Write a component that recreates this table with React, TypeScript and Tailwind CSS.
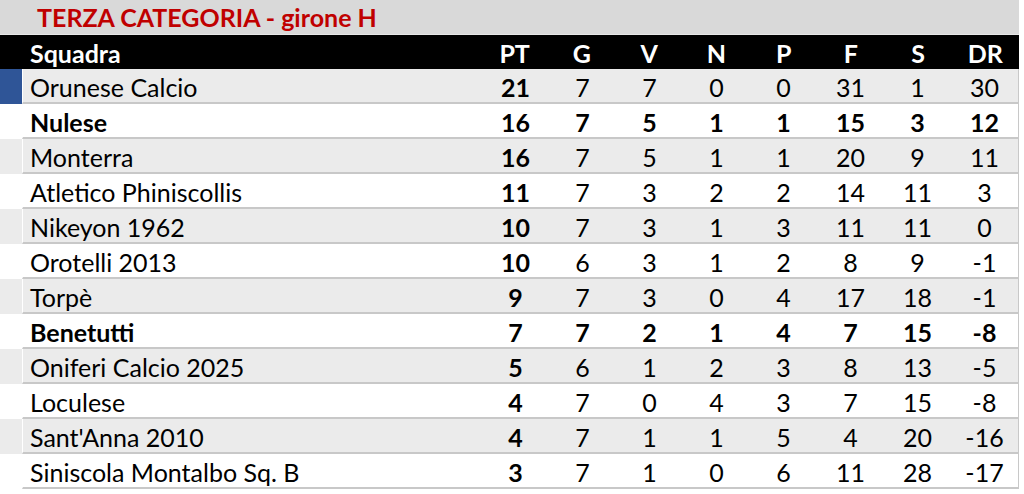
import React from "react";

type Row = { name: string; v: (string | number)[]; bold?: boolean };

const rows: Row[] = [
  { name: "Orunese Calcio", v: [21, 7, 7, 0, 0, 31, 1, 30] },
  { name: "Nulese", v: [16, 7, 5, 1, 1, 15, 3, 12], bold: true },
  { name: "Monterra", v: [16, 7, 5, 1, 1, 20, 9, 11] },
  { name: "Atletico Phiniscollis", v: [11, 7, 3, 2, 2, 14, 11, 3] },
  { name: "Nikeyon 1962", v: [10, 7, 3, 1, 3, 11, 11, 0] },
  { name: "Orotelli 2013", v: [10, 6, 3, 1, 2, 8, 9, -1] },
  { name: "Torpè", v: [9, 7, 3, 0, 4, 17, 18, -1] },
  { name: "Benetutti", v: [7, 7, 2, 1, 4, 7, 15, -8], bold: true },
  { name: "Oniferi Calcio 2025", v: [5, 6, 1, 2, 3, 8, 13, -5] },
  { name: "Loculese", v: [4, 7, 0, 4, 3, 7, 15, -8] },
  { name: "Sant'Anna 2010", v: [4, 7, 1, 1, 5, 4, 20, -16] },
  { name: "Siniscola Montalbo Sq. B", v: [3, 7, 1, 0, 6, 11, 28, -17] },
];

const heads = ["PT", "G", "V", "N", "P", "F", "S", "DR"];

export default function App() {
  return (
    <div className="w-[1024px] h-[494px] bg-white overflow-hidden font-['Lato',sans-serif] text-[25px] text-black">
      <div className="w-[1019px] h-[35px] bg-[#d9d9d9] flex items-center pl-[37px] border-b border-[#e8e8e8]">
        <span className="font-bold text-[#c00000] leading-none">TERZA CATEGORIA - girone H</span>
      </div>
      <div className="w-[1019px] h-[34px] flex bg-black">
        <div className="w-[23px]" />
        <div className="flex-1 grid grid-cols-[458px_repeat(8,1fr)] items-center text-white font-bold">
          <div className="pl-[7px]">Squadra</div>
          {heads.map((h) => (
            <div key={h} className="text-center">{h}</div>
          ))}
        </div>
      </div>
      {rows.map((r, i) => {
        const gray = i % 2 === 0;
        const bg = gray ? "bg-[#ebebeb]" : "bg-white";
        const strip = i === 0 ? "bg-[#2f5597]" : bg;
        return (
          <div key={r.name} className="w-[1019px] h-[35px] flex">
            <div className={`w-[22px] ${strip}`} />
            <div
              className={`flex-1 grid grid-cols-[459px_repeat(8,1fr)] items-center border-l border-white border-b-2 border-b-[#c8c8c8] border-r border-r-[#c8c8c8] ${bg} ${r.bold ? "font-bold" : ""}`}
            >
              <div className="pl-[7px] whitespace-nowrap">{r.name}</div>
              {r.v.map((x, j) => (
                <div key={j} className={`text-center ${j === 0 ? "font-bold" : ""}`}>
                  {x}
                </div>
              ))}
            </div>
          </div>
        );
      })}
    </div>
  );
}
